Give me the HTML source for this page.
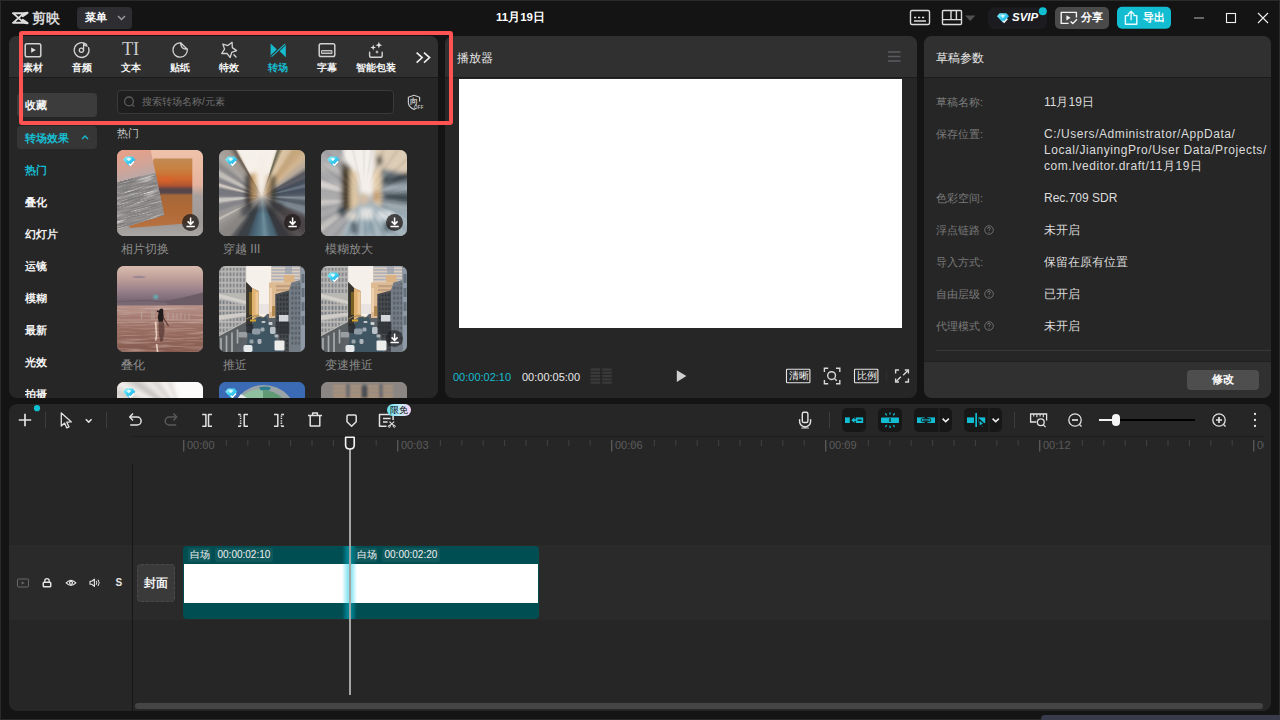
<!DOCTYPE html>
<html lang="zh">
<head>
<meta charset="utf-8">
<title>剪映</title>
<style>
*{box-sizing:border-box;margin:0;padding:0}
html,body{width:1280px;height:720px;overflow:hidden;background:#141414}
body{position:relative;font-family:"Liberation Sans",sans-serif;font-size:12px;color:#fff;-webkit-font-smoothing:antialiased}
.abs{position:absolute}
.win{position:absolute;left:0;top:0;width:1280px;height:720px;border:1px solid #2a2a2a;pointer-events:none;z-index:50}
.panel{position:absolute;background:#262626;border-radius:8px;overflow:hidden}
.phead{position:absolute;left:0;top:0;right:0;height:42px;background:#303030;border-bottom:1px solid #1b1b1b}
.t{position:absolute;white-space:nowrap;line-height:1}
svg{position:absolute;overflow:visible}
/* title bar */
.menu{left:77px;top:7px;width:55px;height:22px;background:#2e2e32;border-radius:4px}
.btn{position:absolute;border-radius:5px}
/* tabs */
.tab{position:absolute;top:61.800px;width:60px;margin-left:-30px;text-align:center;font-size:10px;line-height:11px;color:#f4f4f4;font-weight:bold}
.side{position:absolute;left:25px;font-size:11px;line-height:12px;color:#f4f4f4;font-weight:bold}
.thumb{position:absolute;width:86px;height:86px;border-radius:7px;overflow:hidden;background:#888}
.tl{position:absolute;font-size:12px;line-height:13px;color:#8c8c8c}
.dl{position:absolute;left:65px;top:64px;width:17px;height:17px;border-radius:50%;background:rgba(36,30,30,.78)}
.lab{position:absolute;left:936px;font-size:11.300px;line-height:12px;color:#7a7a7a}
.val{position:absolute;left:1044px;font-size:12px;line-height:16px;color:#dcdcdc}
.tick{position:absolute;top:440px;width:1px;height:6px;background:#3d3d3d}
.mtick{position:absolute;top:440px;width:1px;height:11px;background:#555}
.rt{position:absolute;top:440px;font-size:11px;line-height:11px;color:#5c5c5c}
.tbtn{position:absolute;top:408px;height:24px;background:#171717}
</style>
</head>
<body>

<!-- ================= TITLE BAR ================= -->
<div class="abs" id="titlebar" style="left:0;top:0;width:1280px;height:36px">
  <!-- logo -->
  <svg style="left:12px;top:12px" width="17" height="12" viewBox="0 0 17 12"><path d="M1 1.200h10.400L15.600 .800M1 10.800h10.400L15.600 11.200M1.600 1.600L11.400 10.400M1.600 10.400L11.400 1.600M15.600 1L10.800 4.200M15.600 11L10.800 7.800" fill="none" stroke="#dedede" stroke-width="1.900" stroke-linejoin="round" stroke-linecap="round"/></svg>
  <div class="t" style="left:31.500px;top:11.500px;font-size:13.500px;font-weight:bold;color:#d6d6d6;letter-spacing:.5px">剪映</div>
  <div class="abs menu"></div>
  <div class="t" style="left:85px;top:12px;font-size:11px;font-weight:bold;color:#fff">菜单</div>
  <svg style="left:117px;top:15px" width="9" height="6" viewBox="0 0 9 6"><path d="M1 1l3.5 3.5L8 1" fill="none" stroke="#9a9a9a" stroke-width="1.5"/></svg>
  <div class="t" style="left:496px;top:12px;font-size:11.5px;font-weight:bold;color:#fff">11月19日</div>

  <!-- title bar right -->
  <svg style="left:0;top:0" width="1280" height="36">
    <g fill="none" stroke="#dcdcdc" stroke-width="1.4" stroke-linejoin="round">
      <rect x="910.5" y="10.5" width="19" height="14" rx="1.5"/>
      <path d="M914 17.6h2.2M918 17.6h2.2M922 17.6h2.2M914 21h12" stroke-width="1.5"/>
      <rect x="942.5" y="10.5" width="19" height="14" rx="1"/>
      <path d="M942.5 19.6h19M951 10.5v9M956.4 10.5v9"/>
    </g>
    <path d="M965 15.6h10.4l-5.2 5.4z" fill="#505050"/>
    <!-- svip -->
    <rect x="988" y="7.5" width="59" height="21.5" rx="6" fill="#1c1c20"/>
    <defs><linearGradient id="dia" x1="0" y1="0" x2="1" y2="1"><stop offset="0" stop-color="#8ff4ff"/><stop offset=".55" stop-color="#2fc8ee"/><stop offset="1" stop-color="#3aa0f0"/></linearGradient></defs>
    <path d="M999.6 13.2h6.8l2.6 3l-6 6.6l-6-6.6z" fill="url(#dia)"/>
    <path d="M1000.6 15.6l2.3-1.2l2.4 1.2l-2.4 2.4z" fill="#e8fdff" opacity=".85"/>
    <path d="M1002.6 20.6l1.6 1.6l3.2-3.4" fill="none" stroke="#fff" stroke-width="1.3"/>
    <circle cx="1042.8" cy="11.2" r="4" fill="#10bfd2"/>
    <!-- share -->
    <rect x="1055" y="7" width="54" height="22" rx="5" fill="#4a4a4a"/>
    <g fill="none" stroke="#f4f4f4" stroke-width="1.4" stroke-linejoin="round">
      <path d="M1076.4 17.6v-5.2h-15.2v11h7.4"/>
      <path d="M1070.6 21.4l2.2 2.2l4.2-4.4"/>
    </g>
    <path d="M1066.4 15.2v5.2l4.2-2.6z" fill="#f4f4f4"/>
    <!-- export -->
    <rect x="1117" y="6.8" width="54" height="22" rx="5" fill="#12bdd1"/>
    <g fill="none" stroke="#e8fbff" stroke-width="1.4" stroke-linejoin="round" stroke-linecap="round">
      <path d="M1128.4 15.6h-3v8.6h11.4v-8.6h-3"/>
      <path d="M1131.1 19.8v-8.2M1128.2 14.2l2.9-2.9l2.9 2.9"/>
    </g>
    <!-- window controls -->
    <path d="M1194 18h10" stroke="#8a8a8a" stroke-width="1.4"/>
    <rect x="1226.5" y="13.5" width="9" height="9" fill="none" stroke="#f0f0f0" stroke-width="1.1"/>
    <path d="M1258 13l10 10M1268 13l-10 10" stroke="#f0f0f0" stroke-width="1.1"/>
  </svg>
  <div class="t" style="left:1012px;top:12px;font-size:11.5px;font-weight:bold;font-style:italic;color:#fff">SVIP</div>
  <div class="t" style="left:1081px;top:12px;font-size:11px;font-weight:bold;color:#fff">分享</div>
  <div class="t" style="left:1143px;top:12px;font-size:11px;font-weight:bold;color:#fff">导出</div>
</div>

<!-- ================= LEFT PANEL ================= -->
<div class="panel" id="leftpanel" style="left:9px;top:36px;width:429px;height:362px">
  <div class="phead"></div>
</div>


<!-- ===== left panel content (page coords) ===== -->
<div id="tabs">
  <!-- 素材 -->
  <svg style="left:0;top:0" width="440" height="80">
    <g fill="none" stroke="#d2d2d2" stroke-width="1.5" stroke-linejoin="round" stroke-linecap="round">
      <rect x="25.2" y="43.7" width="15.6" height="13" rx="1.8"/>
      <path d="M31.2 47.4v5.4l4.6-2.7z" fill="#e4e4e4" stroke="none"/>
      <!-- 音频 -->
      <path d="M86.6 44.6A7.4 7.4 0 1 0 88.6 47.6" stroke-width="1.3"/>
      <circle cx="81.4" cy="50.3" r="2.1" stroke-width="1.3"/>
      <path d="M83.6 50.2V43.6q1.2 2.2 3.6 2.6" stroke-width="1.3"/>
      <!-- 贴纸 -->
      <path d="M180.600 42.800A7.200 7.200 0 1 0 187.300 49.200" stroke-width="1.300"/>
      <path d="M180.600 42.800L187.300 49.200Q180.600 49.400 180.600 42.800z" stroke-width="1.300"/>
      <!-- 特效 -->
      <path d="M232.1 42.3L232.3 47.6L236.6 50.6L231.7 52.4L230.2 57.5L227.0 53.3L221.7 53.5L224.6 49.1L222.8 44.1L227.9 45.6z" stroke-width="1.300"/>
      <path d="M233.900 54.800l2.100 2.100" stroke-width="1.400"/>
      <!-- 字幕 -->
      <rect x="319.2" y="43.7" width="15.6" height="12.8" rx="1.8"/>
      <rect x="322" y="50.6" width="10" height="3" stroke-width="1" />
      <path d="M322.6 52.1h8.8" stroke-width=".8"/>
      <!-- 智能包装 -->
      <path d="M369.6 52.2v3.2q0 1.9 1.9 1.9h8.8q1.9 0 1.9-1.9v-3.2" stroke-width="1.4"/>
    </g>
    <g fill="#e6e6e6">
      <path d="M373.2 44.6l.75 2.05l2.05.75l-2.05.75l-.75 2.05l-.75-2.05l-2.05-.75l2.05-.75z"/>
      <path d="M378.9 41.8l.9 2.5l2.5.9l-2.5.9l-.9 2.5l-.9-2.5l-2.5-.9l2.5-.9z"/>
      <path d="M377 50l.55 1.45l1.45.55l-1.45.55l-.55 1.45l-.55-1.45l-1.45-.55l1.45-.55z"/>
    </g>
    <!-- 转场 -->
    <g fill="#16bcd0">
      <path d="M270.6 43.4v13.8l7.2-6.9z"/>
      <path d="M285.8 43.4v13.8l-7.2-6.9z"/>
    </g>
    <path d="M285 43.6L271.4 57" stroke="#303030" stroke-width="3.2" fill="none"/>
    <path d="M284.9 44.2L271.6 56.6" stroke="#16bcd0" stroke-width="1.1" fill="none"/>
    <!-- >> -->
    <path d="M416.6 52.6l5.6 5l-5.6 5M424 52.6l5.6 5l-5.6 5" fill="none" stroke="#f0f0f0" stroke-width="1.6"/>
  </svg>
  <div class="t" style="left:122px;top:40px;font-family:'Liberation Serif',serif;font-size:18.500px;color:#cacaca;letter-spacing:-.3px">TI</div>
  <div class="tab" style="left:33px">素材</div>
  <div class="tab" style="left:82px">音频</div>
  <div class="tab" style="left:131px">文本</div>
  <div class="tab" style="left:180px">贴纸</div>
  <div class="tab" style="left:229px">特效</div>
  <div class="tab" style="left:278px;color:#16bcd0">转场</div>
  <div class="tab" style="left:327px">字幕</div>
  <div class="tab" style="left:376px">智能包装</div>
</div>

<div id="sidebar">
  <div class="abs" style="left:17px;top:93px;width:80px;height:24px;background:#3c3c3c;border-radius:4px"></div>
  <div class="side" style="top:99px">收藏</div>
  <div class="abs" style="left:17px;top:125.500px;width:80px;height:23.500px;background:#363636;border-radius:4px"></div>
  <div class="side" style="top:132px;color:#16bcd0">转场效果</div>
  <svg style="left:81px;top:135px" width="8" height="5" viewBox="0 0 8 5"><path d="M1 4l3-3l3 3" fill="none" stroke="#16bcd0" stroke-width="1.4"/></svg>
  <div class="side" style="top:164px;color:#16bcd0">热门</div>
  <div class="side" style="top:196px">叠化</div>
  <div class="side" style="top:228px">幻灯片</div>
  <div class="side" style="top:260px">运镜</div>
  <div class="side" style="top:292px">模糊</div>
  <div class="side" style="top:324px">最新</div>
  <div class="side" style="top:356px">光效</div>
  <div class="side" style="top:388px;height:10px;overflow:hidden">拍摄</div>
</div>

<div id="search">
  <div class="abs" style="left:117px;top:90px;width:277px;height:24px;background:#1e1e1e;border:1px solid #3a3a3a;border-radius:4px"></div>
  <svg style="left:123px;top:95px" width="13" height="13" viewBox="0 0 13 13"><circle cx="6" cy="6.4" r="4.4" fill="none" stroke="#5c5c5c" stroke-width="1.3"/><path d="M9.2 9.6l2 1.9" stroke="#5c5c5c" stroke-width="1.3"/></svg>
  <div class="t" style="left:142px;top:97px;font-size:10px;color:#707070">搜索转场名称/元素</div>
  <svg style="left:406px;top:94px" width="18" height="17" viewBox="0 0 18 17"><path d="M8 1.2l5.6 2v4.2M8 1.2l-5.6 2v5.6q0 4 5.6 6.6q1-.5 1.6-.9" fill="none" stroke="#c4c4c4" stroke-width="1.2" stroke-linejoin="round"/></svg>
  <div class="t" style="left:410px;top:98px;font-size:8px;color:#c4c4c4;font-weight:bold">向</div>
  <div class="t" style="left:414px;top:106px;font-size:4.5px;color:#c4c4c4;font-weight:bold;letter-spacing:.2px">OFF</div>
  <div class="t" style="left:117px;top:128px;font-size:11px;color:#c6c6c6">热门</div>
</div>

<svg width="0" height="0" style="left:0;top:0"><defs>
<linearGradient id="dia2" x1="0" y1="0" x2="1" y2="1"><stop offset="0" stop-color="#9af6ff"/><stop offset=".5" stop-color="#35cbee"/><stop offset="1" stop-color="#3b9df0"/></linearGradient>
<filter id="b06" x="-10%" y="-10%" width="120%" height="120%"><feGaussianBlur stdDeviation=".6"/></filter>
<filter id="b16" x="-20%" y="-20%" width="140%" height="140%"><feGaussianBlur stdDeviation="2"/></filter>
<filter id="b08" x="-10%" y="-10%" width="120%" height="120%"><feGaussianBlur stdDeviation=".5"/></filter>
<filter id="b1" x="-10%" y="-10%" width="120%" height="120%"><feGaussianBlur stdDeviation="1"/></filter>
<filter id="b2" x="-20%" y="-20%" width="140%" height="140%"><feGaussianBlur stdDeviation="2"/></filter>
<filter id="sea"><feTurbulence type="fractalNoise" baseFrequency="0.06 0.55" numOctaves="2" seed="3" result="n"/><feColorMatrix in="n" type="matrix" values="0 0 0 0 0  0 0 0 0 0  0 0 0 0 0  1.9 0 0 0 -0.75"/><feComposite in2="SourceGraphic" operator="in"/></filter>
<filter id="rip"><feTurbulence type="fractalNoise" baseFrequency="0.03 0.5" numOctaves="2" seed="8" result="n"/><feColorMatrix in="n" type="matrix" values="0 0 0 0 1  0 0 0 0 .85  0 0 0 0 .78  1.6 0 0 0 -0.72"/><feComposite in2="SourceGraphic" operator="in"/></filter>
</defs></svg>
<div id="thumbs">
  <div class="thumb" id="th1" style="left:117px;top:150px"><svg style="left:0;top:0" width="86" height="86" viewBox="0 0 86 86">
<defs>
<linearGradient id="t1bg" x1="0" y1="0" x2="0" y2="1"><stop offset="0" stop-color="#f0c2aa"/><stop offset=".4" stop-color="#e6b49e"/><stop offset=".53" stop-color="#a8a09e"/><stop offset=".85" stop-color="#9c9896"/><stop offset="1" stop-color="#aaa6a4"/></linearGradient>
<linearGradient id="t1o" x1="0" y1="0" x2="0" y2="1"><stop offset="0" stop-color="#c08a54"/><stop offset=".16" stop-color="#c8803f"/><stop offset=".3" stop-color="#d0662e"/><stop offset=".39" stop-color="#b05530"/><stop offset=".44" stop-color="#5a4448"/><stop offset=".49" stop-color="#54464c"/><stop offset=".53" stop-color="#a4663a"/><stop offset=".7" stop-color="#ae6936"/><stop offset="1" stop-color="#b87040"/></linearGradient>
<linearGradient id="t1s" gradientUnits="userSpaceOnUse" x1="14" y1="0" x2="21" y2="28"><stop offset="0" stop-color="#e6a088"/><stop offset=".6" stop-color="#d0a498"/><stop offset=".96" stop-color="#bca8a6"/><stop offset="1" stop-color="#9a9696"/></linearGradient>
<clipPath id="t1c"><path d="M-1 -1H33.500L47.200 65L2 79H-1z"/></clipPath>
<filter id="sea2" x="0" y="0" width="100%" height="100%"><feTurbulence type="fractalNoise" baseFrequency="0.05 0.9" numOctaves="2" seed="5"/><feColorMatrix type="matrix" values="0 0 0 0 .2  0 0 0 0 .19  0 0 0 0 .19  3.400 0 0 0 -1.300"/></filter>
<filter id="sea3" x="0" y="0" width="100%" height="100%"><feTurbulence type="fractalNoise" baseFrequency="0.05 0.85" numOctaves="2" seed="11"/><feColorMatrix type="matrix" values="0 0 0 0 .82  0 0 0 0 .8  0 0 0 0 .8  2.400 0 0 0 -1.250"/></filter>
</defs>
<rect width="86" height="86" fill="url(#t1bg)"/>
<path d="M37 8.400H75.300V73L12 78z" fill="url(#t1o)" filter="url(#b06)"/>
<ellipse cx="49" cy="30" rx="8" ry="3" fill="#e0602c" opacity=".55" filter="url(#b1)"/>
<g clip-path="url(#t1c)">
<rect x="-1" y="-1" width="50" height="82" fill="url(#t1s)"/>
<g transform="rotate(-15.500 0 33.500)">
<rect x="-12" y="33.500" width="74" height="62" fill="#959191"/>
<rect x="-12" y="33.500" width="74" height="62" filter="url(#sea2)"/>
<rect x="-12" y="33.500" width="74" height="62" filter="url(#sea3)"/>
</g>
</g>
</svg><svg style="left:5.5px;top:6px" width="13" height="11" viewBox="0 0 13 11"><path d="M3 .6h6.600l2.800 3.100l-6.100 6.600l-6.100-6.600z" fill="url(#dia2)"/><path d="M3.400 2.800l2.400-1.300l2.600 1.300l-2.600 2.500z" fill="#f0feff" opacity=".9"/><path d="M5.800 7.700l1.700 1.600l3.500-3.700" fill="none" stroke="#fff" stroke-width="1.400"/></svg><div class="dl"><svg style="left:0;top:0" width="17" height="17" viewBox="0 0 17 17"><path d="M8.600 3.600v6.400M5.600 7.400l3 3l3-3" fill="none" stroke="#fff" stroke-width="1.500"/><path d="M4.400 12.500h8.400" stroke="#fff" stroke-width="1.500"/></svg></div></div>
  <div class="thumb" id="th2" style="left:219px;top:150px"><div class="abs" style="left:-6px;top:-6px;width:98px;height:98px;filter:blur(.7px);background:radial-gradient(circle at 50% 53.600%,rgba(226,214,202,.95) 0,rgba(206,190,172,.75) 5%,rgba(150,120,84,.4) 10%,rgba(70,60,52,.28) 15%,rgba(80,80,84,0) 26%),conic-gradient(from 0deg at 50% 53.600%,#f6f0ea 0deg,#f6f0ea 15deg,#e8dccb 17deg,#7a7664 18.500deg,#6e6c5c 20deg,#a89878 22deg,#dcc6a6 25deg,#d8c0a0 30deg,#c4a67c 35deg,#c8a880 40deg,#d2b692 46deg,#c0ae9a 51deg,#b4a698 55deg,#8a8480 58deg,#54545c 61deg,#5e5e66 65deg,#4a4e58 69deg,#424e5e 72deg,#6c7680 76deg,#444f5e 80deg,#4a5462 84deg,#565e68 88deg,#88909a 92deg,#5a626c 96deg,#545c66 100deg,#7a848e 104deg,#7c868e 110deg,#5e6066 114deg,#4c4648 118deg,#484244 128deg,#585254 136deg,#4a4648 142deg,#38383c 148deg,#363a40 156deg,#46606e 161deg,#52707f 168deg,#6e8e9e 176deg,#587888 182deg,#4c6878 190deg,#43596a 196deg,#3a4248 201deg,#3c4044 210deg,#5c5c5e 216deg,#888482 220deg,#8a8684 228deg,#969290 236deg,#a09c9a 240deg,#cac2ba 242.500deg,#9c9896 245deg,#969496 250deg,#868689 253deg,#84848a 259deg,#a4a2a2 261.500deg,#cac6c2 263.500deg,#c6c2be 267deg,#8c8c90 269.500deg,#78787f 272deg,#76767e 280deg,#a8a4a0 282.500deg,#d2cac2 284.500deg,#cec6be 286deg,#8e8c8e 288deg,#808086 291deg,#9c9a9a 293.500deg,#c2beba 296deg,#bebab6 300deg,#969494 302.500deg,#8a8888 306deg,#9c9a98 309.500deg,#aaa6a2 313deg,#a6a09a 318deg,#a09890 324deg,#8a8078 326.500deg,#665e58 329deg,#8a7c6c 330.500deg,#e6dccf 332deg,#f6f0ea 334deg,#f6f0ea 360deg)"></div><svg style="left:0;top:0" width="86" height="86" viewBox="0 0 86 86">
<ellipse cx="42.500" cy="24" rx="5.500" ry="21" fill="#f5eee7" filter="url(#b2)"/>
<g filter="url(#b16)">
<rect x="26.500" y="25" width="6" height="33" fill="#2c2826" opacity=".8"/>
<rect x="33" y="23" width="4.200" height="27" fill="#c8964e" opacity=".75"/>
<rect x="47.500" y="25" width="3" height="23" fill="#c8a070" opacity=".7"/>
<rect x="51" y="26" width="5.500" height="27" fill="#3a3832" opacity=".75"/>
<rect x="36" y="48" width="14" height="9" fill="#8a94a0" opacity=".6"/>
<rect x="22" y="56" width="12" height="10" fill="#2c3238" opacity=".6"/>
<rect x="52" y="52" width="12" height="10" fill="#30343a" opacity=".55"/>
</g></svg><svg style="left:5.5px;top:6px" width="13" height="11" viewBox="0 0 13 11"><path d="M3 .6h6.600l2.800 3.100l-6.100 6.600l-6.100-6.600z" fill="url(#dia2)"/><path d="M3.400 2.800l2.400-1.300l2.600 1.300l-2.600 2.500z" fill="#f0feff" opacity=".9"/><path d="M5.800 7.700l1.700 1.600l3.500-3.700" fill="none" stroke="#fff" stroke-width="1.400"/></svg><div class="dl"><svg style="left:0;top:0" width="17" height="17" viewBox="0 0 17 17"><path d="M8.600 3.600v6.400M5.600 7.400l3 3l3-3" fill="none" stroke="#fff" stroke-width="1.500"/><path d="M4.400 12.500h8.400" stroke="#fff" stroke-width="1.500"/></svg></div></div>
  <div class="thumb" id="th3" style="left:321px;top:150px"><svg style="left:0;top:0" width="86" height="86" viewBox="0 0 86 86">
<g filter="url(#b16)">
<rect x="-6" y="-6" width="98" height="98" fill="#a2b2bb"/>
<path d="M-6 -6H22V64L30 60L20 92H-6z" fill="#a5a5a7"/>
<path d="M-6 29L22 37V42L-6 37z" fill="#dad6d2"/>
<path d="M-6 49L22 49.500V53L-6 55z" fill="#d2cecb"/>
<path d="M-6 80L22 60.500V64L-6 87z" fill="#cdc9c5"/>
<path d="M-6 10L22 18V24L-6 18z" fill="#bdbbb9"/>
<path d="M20.500 10L29.500 16.500V60L20.500 66z" fill="#4a3c2c"/>
<path d="M29 17L37 22V56L29 60.500z" fill="#dec6a2"/>
<path d="M22 -6H53.500L52 42L46.500 50H40L36.500 23L29 17L22 11z" fill="#f4f0ec"/>
<path d="M52 22L60.500 18V57L52 52z" fill="#e4ccaa"/>
<path d="M52.500 41h6v10h-6z" fill="#c49a66"/>
<path d="M53.500 -6H92V25L60.500 19L53 22z" fill="#dccbb4"/>
<path d="M55 7L60.500 5L62 14L56.500 16z" fill="#626258"/>
<path d="M60.500 19L92 25V62L60.500 57z" fill="#69757d"/>
<path d="M62 29L92 21V28L62 34z" fill="#363e44"/><path d="M64 44L92 46V53L64 48.500z" fill="#384248"/>
<path d="M62 37.500L92 34V39L62 41z" fill="#b2bec6"/><path d="M62 52L92 56V60L62 55z" fill="#b8c4ca"/>
<rect x="39" y="58" width="13" height="11" fill="#e0e2e0"/><rect x="56" y="61" width="16" height="9" fill="#d4dce0"/>
<rect x="26" y="62" width="10" height="8" fill="#d8d4cc"/>
<rect x="30" y="72" width="6.500" height="12" fill="#4c5c68"/><rect x="17" y="57" width="7.500" height="9" fill="#3a4a52"/>
<rect x="62" y="73" width="9" height="9" fill="#5a6a74"/><rect x="44" y="72" width="8" height="12" fill="#8aa0ac"/>
<circle cx="43" cy="49" r="6" fill="#cfbca6"/>
</g>
</svg>
<div class="abs" style="left:0;top:0;width:86px;height:86px;background:repeating-conic-gradient(from 3deg at 50% 56%,rgba(255,255,255,.08) 0deg,rgba(255,255,255,0) 3deg,rgba(20,20,30,.06) 6deg,rgba(20,20,30,0) 9deg,rgba(255,255,255,.06) 11deg,rgba(255,255,255,0) 13deg);-webkit-mask-image:radial-gradient(circle at 50% 56%,transparent 12%,#000 45%);mask-image:radial-gradient(circle at 50% 56%,transparent 12%,#000 45%)"></div><svg style="left:5.5px;top:6px" width="13" height="11" viewBox="0 0 13 11"><path d="M3 .6h6.600l2.800 3.100l-6.100 6.600l-6.100-6.600z" fill="url(#dia2)"/><path d="M3.400 2.800l2.400-1.300l2.600 1.300l-2.600 2.500z" fill="#f0feff" opacity=".9"/><path d="M5.800 7.700l1.700 1.600l3.500-3.700" fill="none" stroke="#fff" stroke-width="1.400"/></svg><div class="dl"><svg style="left:0;top:0" width="17" height="17" viewBox="0 0 17 17"><path d="M8.600 3.600v6.400M5.600 7.400l3 3l3-3" fill="none" stroke="#fff" stroke-width="1.500"/><path d="M4.400 12.500h8.400" stroke="#fff" stroke-width="1.500"/></svg></div></div>
  <div class="thumb" id="th4" style="left:117px;top:266px"><svg style="left:0;top:0" width="86" height="86" viewBox="0 0 86 86">
<defs>
<linearGradient id="t4s" x1="0" y1="0" x2="0" y2="1"><stop offset="0" stop-color="#d8bcae"/><stop offset=".3" stop-color="#c0a09a"/><stop offset=".62" stop-color="#98808a"/><stop offset=".85" stop-color="#7a6a76"/><stop offset="1" stop-color="#6e626c"/></linearGradient>
<linearGradient id="t4w" x1="0" y1="0" x2="0" y2="1"><stop offset="0" stop-color="#b8948c"/><stop offset=".25" stop-color="#a67c72"/><stop offset=".6" stop-color="#966a5e"/><stop offset="1" stop-color="#855a4e"/></linearGradient>
</defs>
<rect width="86" height="40" fill="url(#t4s)"/>
<rect y="39" width="86" height="47" fill="url(#t4w)"/>
<g filter="url(#b06)">
<path d="M0 35.500L14 34.500L30 33.800L42 35L52 34.200L66 31.600L86 26.600V39.300H0z" fill="#6c5c66"/>
<path d="M0 36L30 35L50 36.800V39.300H0z" fill="#7a6a74" opacity=".8"/>
<ellipse cx="22" cy="11" rx="7" ry="1.200" fill="#8c7c92" opacity=".7"/>
</g>
<circle cx="38.700" cy="31" r="2.300" fill="#5cc4cc" filter="url(#b1)" opacity=".8"/>
<rect y="40" width="86" height="46" fill="#fff" filter="url(#rip)" opacity=".55"/>
<g filter="url(#b06)">
<path d="M24.500 45.500v8M35 44v9.500M37 44.500v9M51 46.500v7M56 47v6.500M60 47.500v6M64 47v6.500M68 48v5.500M72 47.500v6" stroke="#c8c4bc" stroke-width="1.100" opacity=".42"/>
<path d="M0 54h86" stroke="#c4a49c" stroke-width="1.400" opacity=".5"/>
<path d="M42 44.500q1.200-2.600 3.400-1.800q1.600 1 .8 3l.6 6.500l-1 3.500h-4.200l-.8-4.500z" fill="#241a1e"/>
<path d="M40 44.800l3 1.400" stroke="#241a1e" stroke-width="1.400"/>
<path d="M46.500 52l5 8" stroke="#5a3a36" stroke-width="1.200"/>
<path d="M41.500 56h5.500l.6 9l-1.800 10l-2.600 1l-1.400-9z" fill="#5a3834" opacity=".75"/>
<path d="M38.600 55.500l.8 14l-.6 5M39.600 78l1 8" stroke="#f2dccc" stroke-width="1.700" opacity=".85"/>
</g>
</svg></div>
  <div class="thumb" id="th5" style="left:219px;top:266px"><svg style="left:0;top:0" width="86" height="86" viewBox="0 0 86 86">
<defs>
<pattern id="wL5" width="3.400" height="5.600" patternUnits="userSpaceOnUse"><rect x=".4" y=".8" width="1.700" height="3.800" fill="#6d737b"/></pattern>
<pattern id="wR5" width="86" height="3.200" patternUnits="userSpaceOnUse"><rect x="0" y="0" width="86" height="1.400" fill="#a2a9b8"/></pattern>
<pattern id="wD5" width="3.200" height="4.600" patternUnits="userSpaceOnUse"><rect x="0" y="0" width="1.800" height="2.800" fill="#2e3236"/></pattern>
<pattern id="wG5" width="3.600" height="5" patternUnits="userSpaceOnUse"><rect x=".4" y=".6" width="1.800" height="3" fill="#4e565e"/></pattern>
</defs>
<rect width="86" height="86" fill="#5c6268"/>
<g filter="url(#b08)">
<!-- sky -->
<path d="M27 -1H52.500V17L50 18V46L45 51H39.500V25L33 22L27 16z" fill="#f6f0ea"/>
<path d="M40 38h10v10h-10z" fill="#e9e4e2"/>
<!-- right tall beige -->
<path d="M52 -1H81.500V17H52z" fill="#dccdbd"/><path d="M52.500 0H81V16H52.500z" fill="url(#wR5)" opacity=".9"/>
<path d="M65 9h10.500v7.500H65z" fill="#dab284"/>
<path d="M66 0h7v8h-7z" fill="#98a0ac" opacity=".7"/>
<!-- right mid tan -->
<path d="M50 16.500H72.500V28H56.500V52H50z" fill="#deba92"/>
<path d="M57 19h14v2.200H57zM57 23h14v2.200H57z" fill="#b89a80" opacity=".8"/>
<path d="M50.500 22h2.400v24h-2.400z" fill="#ecd2b0"/>
<path d="M53 40h3.500v10H53z" fill="#b08850"/>
<!-- right gray buildings -->
<path d="M70 24L72.500 16.500L81.500 14V87H70z" fill="#737b84"/>
<path d="M71 20L81 17V80H71z" fill="url(#wG5)" opacity=".85"/>
<path d="M56.500 28L70 24.500V87H64L56.500 60z" fill="#474b50"/>
<path d="M57.500 30L69.500 27V84H64L57.500 58z" fill="url(#wD5)" opacity=".9"/>
<path d="M81.500 2L87 0V87H81.500z" fill="#8d99a6"/>
<path d="M82.500 8h3v9h-3zM82.500 22h3v9h-3zM82.500 36h3v9h-3zM82.500 50h3v9h-3z" fill="#5c6670" opacity=".8"/>
<path d="M60 49h9.500v6.500H60z" fill="#e2e6ea" opacity=".9"/>
<path d="M56.500 56h14v12h-14z" fill="#2c3034" opacity=".65"/>
<!-- left building -->
<path d="M-1 -1H27.200V56L-1 71z" fill="#b9b7b4"/>
<path d="M0 2H26.500V27H0z" fill="url(#wL5)" opacity=".8"/>
<path d="M-1 27.500L27.200 35V38L-1 31.500z" fill="#d3cfcb"/>
<path d="M0 33L26.500 39.500V47L0 49z" fill="url(#wL5)" opacity=".95"/>
<path d="M-1 49.500L27.200 46.500V49.500L-1 54z" fill="#d0ccc8"/>
<path d="M0 55L26.500 50.500V55L0 69z" fill="url(#wL5)" opacity=".85"/>
<path d="M-1 71L27.200 56V63L18 87H-1z" fill="#5a5e62"/>
<path d="M2 72v15M7.500 69.500v17M13 66.500v20M18.500 63.500v14" stroke="#a9abac" stroke-width="1.700"/>
<!-- dark + tan behind -->
<path d="M27.200 16L33 22V60H27.200z" fill="#38342e"/><path d="M30 26h3v23h-3z" fill="#86691e" opacity=".85"/>
<path d="M33 22L39.500 25V50L33 54z" fill="#e2b272"/><path d="M36.500 26h3v22h-3z" fill="#ecc996"/>
<!-- road -->
<path d="M39.500 51H47.500L63 87H27L30 62z" fill="#3f5462"/>
<path d="M27.200 58h7v9h-7z" fill="#2a2e32" opacity=".85"/>
<path d="M27.500 53q8-5.500 17-1.500" fill="none" stroke="#9a8458" stroke-width="1"/>
<path d="M31 53.500h6v2h-6z" fill="#d4a430"/>
<!-- cars -->
<rect x="24.500" y="79" width="9" height="7" rx="1.800" fill="#e6eaec"/>
<rect x="55.500" y="74.500" width="10" height="10" rx="1" fill="#ececea"/>
<rect x="51" y="61" width="5.500" height="7" rx="1.400" fill="#b9c2c8"/>
<rect x="33" y="62.500" width="8.500" height="6" rx="2" fill="#8e9aa4"/>
<rect x="38.500" y="73" width="4" height="5" rx="1.400" fill="#aeb6bc"/>
<rect x="41.500" y="61.500" width="4" height="4" rx="1.200" fill="#9eaab2"/>
<rect x="19.500" y="66" width="8.500" height="5.500" rx="1" fill="#9a9ea2"/>
<rect x="30.500" y="73.500" width="4" height="4" rx="1.200" fill="#98a2a8"/>
<rect x="49.500" y="56" width="4" height="3" rx="1" fill="#ccd0d2"/>
<rect x="42.500" y="55" width="4" height="2" rx="1" fill="#c8c8c6"/>
<rect x="55.500" y="68.500" width="4" height="3" rx="1" fill="#a8b2b8"/>
</g>
</svg></div>
  <div class="thumb" id="th6" style="left:321px;top:266px"><svg style="left:0;top:0" width="86" height="86" viewBox="0 0 86 86">
<defs>
<pattern id="wL6" width="3.400" height="5.600" patternUnits="userSpaceOnUse"><rect x=".4" y=".8" width="1.700" height="3.800" fill="#6d737b"/></pattern>
<pattern id="wR6" width="86" height="3.200" patternUnits="userSpaceOnUse"><rect x="0" y="0" width="86" height="1.400" fill="#a2a9b8"/></pattern>
<pattern id="wD6" width="3.200" height="4.600" patternUnits="userSpaceOnUse"><rect x="0" y="0" width="1.800" height="2.800" fill="#2e3236"/></pattern>
<pattern id="wG6" width="3.600" height="5" patternUnits="userSpaceOnUse"><rect x=".4" y=".6" width="1.800" height="3" fill="#4e565e"/></pattern>
</defs>
<rect width="86" height="86" fill="#5c6268"/>
<g filter="url(#b08)">
<!-- sky -->
<path d="M27 -1H52.500V17L50 18V46L45 51H39.500V25L33 22L27 16z" fill="#f6f0ea"/>
<path d="M40 38h10v10h-10z" fill="#e9e4e2"/>
<!-- right tall beige -->
<path d="M52 -1H81.500V17H52z" fill="#dccdbd"/><path d="M52.500 0H81V16H52.500z" fill="url(#wR6)" opacity=".9"/>
<path d="M65 9h10.500v7.500H65z" fill="#dab284"/>
<path d="M66 0h7v8h-7z" fill="#98a0ac" opacity=".7"/>
<!-- right mid tan -->
<path d="M50 16.500H72.500V28H56.500V52H50z" fill="#deba92"/>
<path d="M57 19h14v2.200H57zM57 23h14v2.200H57z" fill="#b89a80" opacity=".8"/>
<path d="M50.500 22h2.400v24h-2.400z" fill="#ecd2b0"/>
<path d="M53 40h3.500v10H53z" fill="#b08850"/>
<!-- right gray buildings -->
<path d="M70 24L72.500 16.500L81.500 14V87H70z" fill="#737b84"/>
<path d="M71 20L81 17V80H71z" fill="url(#wG6)" opacity=".85"/>
<path d="M56.500 28L70 24.500V87H64L56.500 60z" fill="#474b50"/>
<path d="M57.500 30L69.500 27V84H64L57.500 58z" fill="url(#wD6)" opacity=".9"/>
<path d="M81.500 2L87 0V87H81.500z" fill="#8d99a6"/>
<path d="M82.500 8h3v9h-3zM82.500 22h3v9h-3zM82.500 36h3v9h-3zM82.500 50h3v9h-3z" fill="#5c6670" opacity=".8"/>
<path d="M60 49h9.500v6.500H60z" fill="#e2e6ea" opacity=".9"/>
<path d="M56.500 56h14v12h-14z" fill="#2c3034" opacity=".65"/>
<!-- left building -->
<path d="M-1 -1H27.200V56L-1 71z" fill="#b9b7b4"/>
<path d="M0 2H26.500V27H0z" fill="url(#wL6)" opacity=".8"/>
<path d="M-1 27.500L27.200 35V38L-1 31.500z" fill="#d3cfcb"/>
<path d="M0 33L26.500 39.500V47L0 49z" fill="url(#wL6)" opacity=".95"/>
<path d="M-1 49.500L27.200 46.500V49.500L-1 54z" fill="#d0ccc8"/>
<path d="M0 55L26.500 50.500V55L0 69z" fill="url(#wL6)" opacity=".85"/>
<path d="M-1 71L27.200 56V63L18 87H-1z" fill="#5a5e62"/>
<path d="M2 72v15M7.500 69.500v17M13 66.500v20M18.500 63.500v14" stroke="#a9abac" stroke-width="1.700"/>
<!-- dark + tan behind -->
<path d="M27.200 16L33 22V60H27.200z" fill="#38342e"/><path d="M30 26h3v23h-3z" fill="#86691e" opacity=".85"/>
<path d="M33 22L39.500 25V50L33 54z" fill="#e2b272"/><path d="M36.500 26h3v22h-3z" fill="#ecc996"/>
<!-- road -->
<path d="M39.500 51H47.500L63 87H27L30 62z" fill="#3f5462"/>
<path d="M27.200 58h7v9h-7z" fill="#2a2e32" opacity=".85"/>
<path d="M27.500 53q8-5.500 17-1.500" fill="none" stroke="#9a8458" stroke-width="1"/>
<path d="M31 53.500h6v2h-6z" fill="#d4a430"/>
<!-- cars -->
<rect x="24.500" y="79" width="9" height="7" rx="1.800" fill="#e6eaec"/>
<rect x="55.500" y="74.500" width="10" height="10" rx="1" fill="#ececea"/>
<rect x="51" y="61" width="5.500" height="7" rx="1.400" fill="#b9c2c8"/>
<rect x="33" y="62.500" width="8.500" height="6" rx="2" fill="#8e9aa4"/>
<rect x="38.500" y="73" width="4" height="5" rx="1.400" fill="#aeb6bc"/>
<rect x="41.500" y="61.500" width="4" height="4" rx="1.200" fill="#9eaab2"/>
<rect x="19.500" y="66" width="8.500" height="5.500" rx="1" fill="#9a9ea2"/>
<rect x="30.500" y="73.500" width="4" height="4" rx="1.200" fill="#98a2a8"/>
<rect x="49.500" y="56" width="4" height="3" rx="1" fill="#ccd0d2"/>
<rect x="42.500" y="55" width="4" height="2" rx="1" fill="#c8c8c6"/>
<rect x="55.500" y="68.500" width="4" height="3" rx="1" fill="#a8b2b8"/>
</g>
</svg><svg style="left:5.5px;top:6px" width="13" height="11" viewBox="0 0 13 11"><path d="M3 .6h6.600l2.800 3.100l-6.100 6.600l-6.100-6.600z" fill="url(#dia2)"/><path d="M3.400 2.800l2.400-1.300l2.600 1.300l-2.600 2.500z" fill="#f0feff" opacity=".9"/><path d="M5.800 7.700l1.700 1.600l3.500-3.700" fill="none" stroke="#fff" stroke-width="1.400"/></svg><div class="dl" style="background:rgba(20,20,22,.55)"><svg style="left:0;top:0" width="17" height="17" viewBox="0 0 17 17"><path d="M8.600 3.600v6.400M5.600 7.400l3 3l3-3" fill="none" stroke="#fff" stroke-width="1.500"/><path d="M4.400 12.500h8.400" stroke="#fff" stroke-width="1.500"/></svg></div></div>
  <div class="thumb" id="th7" style="left:117px;top:382px;height:16px;border-radius:7px 7px 0 0;background:#f2eeea"><div class="abs" style="left:-4px;top:-4px;width:94px;height:30px;filter:blur(.8px);background:conic-gradient(from 0deg at 75% 130%,#fdfcfb 0deg,#fdfcfb 280deg,#d2cecb 290deg,#f2efed 298deg,#c6c2c0 306deg,#ebe8e6 314deg,#d8d4d2 322deg,#f6f4f2 330deg,#e4e0de 338deg,#fbfaf9 346deg,#fdfcfb 360deg)"></div><svg style="left:5.5px;top:6px" width="13" height="11" viewBox="0 0 13 11"><path d="M3 .6h6.600l2.800 3.100l-6.100 6.600l-6.100-6.600z" fill="url(#dia2)"/><path d="M3.400 2.800l2.400-1.300l2.600 1.300l-2.600 2.500z" fill="#f0feff" opacity=".9"/><path d="M5.800 7.700l1.700 1.600l3.500-3.700" fill="none" stroke="#fff" stroke-width="1.400"/></svg></div>
  <div class="thumb" id="th8" style="left:219px;top:382px;height:16px;border-radius:7px 7px 0 0;background:#3d6cb6"><svg style="left:0;top:0" width="86" height="16" viewBox="0 0 86 16"><rect width="86" height="16" fill="#3c6bb6"/><g filter="url(#b06)"><circle cx="45" cy="36" r="33" fill="#9aa4a6"/><circle cx="43" cy="38" r="30" fill="#5f9a74"/><path d="M22 16q8-9 22-9v9z" fill="#8fc0a0"/><path d="M40 5.500q6-2 12 0l-2 3q-4-1.200-8 0z" fill="#2e7e8e"/><path d="M22 12l6 4h-9z" fill="#e8ecec"/></g></svg><svg style="left:5.5px;top:6px" width="13" height="11" viewBox="0 0 13 11"><path d="M3 .6h6.600l2.800 3.100l-6.100 6.600l-6.100-6.600z" fill="url(#dia2)"/><path d="M3.400 2.800l2.400-1.300l2.600 1.300l-2.600 2.500z" fill="#f0feff" opacity=".9"/><path d="M5.800 7.700l1.700 1.600l3.500-3.700" fill="none" stroke="#fff" stroke-width="1.400"/></svg></div>
  <div class="thumb" id="th9" style="left:321px;top:382px;height:16px;border-radius:7px 7px 0 0;background:#8c8784"><svg style="left:0;top:0" width="86" height="16" viewBox="0 0 86 16"><rect width="86" height="16" fill="#8b8683"/><g filter="url(#b1)"><path d="M12 4.500h60M12 8.500h60M12 12.500h60M12 16h60" stroke="#b5967a" stroke-width="1.800"/><path d="M27 2v14M43.500 2v14M60 2v14" stroke="#6a6c70" stroke-width="4"/><path d="M43.500 4v12" stroke="#4c5054" stroke-width="6"/></g></svg></div>
  <div class="tl" style="left:121px;top:242.600px">相片切换</div>
  <div class="tl" style="left:223px;top:242.600px">穿越 III</div>
  <div class="tl" style="left:325px;top:242.600px">模糊放大</div>
  <div class="tl" style="left:121px;top:358.600px">叠化</div>
  <div class="tl" style="left:223px;top:358.600px">推近</div>
  <div class="tl" style="left:325px;top:358.600px">变速推近</div>
</div>

<!-- ================= PLAYER PANEL ================= -->
<div class="panel" id="player" style="left:445px;top:36px;width:472px;height:362px">
  <div class="phead"></div>
  <div class="t" style="left:12px;top:15.700px;font-size:12px;color:#e6e6e6">播放器</div>
  <div class="abs" style="left:14px;top:43px;width:443px;height:249px;background:#fff"></div>
  <div class="t" style="left:8px;top:336px;font-size:11px;color:#16bcd0">00:00:02:10</div>
  <div class="t" style="left:77px;top:336px;font-size:11px;color:#e8e8e8">00:00:05:00</div>
</div>


<!-- player controls (page coords) -->
<svg style="left:0;top:0" width="930" height="400">
  <!-- hamburger -->
  <path d="M888 52h12.5M888 56.5h12.5M888 61h12.5" stroke="#5a5a60" stroke-width="1.4"/>
  <!-- meter -->
  <g fill="#3a3a3a">
    <rect x="590.5" y="368.4" width="9.6" height="2.2"/><rect x="590.5" y="371.7" width="9.6" height="2.2"/><rect x="590.5" y="375" width="9.6" height="2.2"/><rect x="590.5" y="378.3" width="9.6" height="2.2"/><rect x="590.5" y="381.6" width="9.6" height="2.2"/>
    <rect x="602.2" y="368.4" width="9.6" height="2.2"/><rect x="602.2" y="371.7" width="9.6" height="2.2"/><rect x="602.2" y="375" width="9.6" height="2.2"/><rect x="602.2" y="378.3" width="9.6" height="2.2"/><rect x="602.2" y="381.6" width="9.6" height="2.2"/>
  </g>
  <!-- play -->
  <path d="M676.8 370.2v11.8l9.6-5.9z" fill="#d0d0d0"/>
  <!-- quality / ratio boxes -->
  <g fill="none" stroke="#e8e8e8" stroke-width="1.1">
    <rect x="786.5" y="369.2" width="23.4" height="13.6" rx=".8"/>
    <rect x="854.5" y="369.2" width="23.4" height="13.6" rx=".8"/>
  </g>
  <!-- focus -->
  <g fill="none" stroke="#d8d8d8" stroke-width="1.4">
    <path d="M824.4 372v-3.8h3.8M836 368.2h3.8v3.800M839.800 380v3.800h-3.800M828.200 383.800h-3.800v-3.800"/>
    <circle cx="831.600" cy="375.6" r="3.900"/>
    <path d="M834.4 378.500l2.400 2.300"/>
  </g>
  <!-- divider -->
  <path d="M886.5 371v10" stroke="#2f2f2f" stroke-width="1"/>
  <!-- fullscreen -->
  <g fill="none" stroke="#d8d8d8" stroke-width="1.4">
    <path d="M895.600 373.400v-3.400h3.400M904.800 370h3.600v3.600M908.400 378.600v3.400h-3.400M899 382h-3.400v-3.400"/>
    <path d="M907.800 370.600l-4.600 4.600M896.200 381.400l4.600-4.600"/>
  </g>
</svg>
<div class="t" style="left:788px;top:371px;font-size:10px;color:#f0f0f0;width:21px;text-align:center">清晰</div>
<div class="t" style="left:856px;top:371px;font-size:10px;color:#f0f0f0;width:21px;text-align:center">比例</div>

<!-- ================= RIGHT PANEL ================= -->
<div class="panel" id="rightpanel" style="left:924px;top:36px;width:347px;height:362px">
  <div class="phead"></div>
  <div class="t" style="left:12px;top:15.700px;font-size:12px;color:#e6e6e6">草稿参数</div>
  <div class="abs" style="left:12px;top:314px;right:0;height:1px;background:#383838"></div>
  <div class="abs" style="left:0;top:325px;right:0;height:1px;background:#202020"></div>
  <div class="abs" style="left:0;top:326px;right:0;bottom:0;background:#303030"></div>
  <div class="abs" style="left:263px;top:334px;width:72px;height:20px;background:#4e4e4e;border-radius:4px"></div>
  <div class="t" style="left:263px;top:338px;width:72px;text-align:center;font-size:11px;font-weight:bold;color:#fff">修改</div>
</div>
<div class="lab" style="top:96px">草稿名称:</div><div class="val" style="top:94px">11月19日</div>
<div class="lab" style="top:128px">保存位置:</div><div class="val" style="top:126px;letter-spacing:.56px">C:/Users/Administrator/AppData/<br>Local/JianyingPro/User Data/Projects/<br>com.lveditor.draft/11月19日</div>
<div class="lab" style="top:192px">色彩空间:</div><div class="val" style="top:190px;letter-spacing:0">Rec.709 SDR</div>
<div class="lab" style="top:224px">浮点链路</div><div class="val" style="top:222px">未开启</div>
<div class="lab" style="top:256px">导入方式:</div><div class="val" style="top:254px">保留在原有位置</div>
<div class="lab" style="top:288px">自由层级</div><div class="val" style="top:286px">已开启</div>
<div class="lab" style="top:320px">代理模式</div><div class="val" style="top:318px">未开启</div>


<svg style="left:0;top:0" width="1000" height="340"><g fill="none" stroke="#6c6c6c" stroke-width="1"><circle cx="989" cy="230" r="4.300"/><circle cx="989" cy="294" r="4.300"/><circle cx="989" cy="326" r="4.300"/></g>
<g fill="none" stroke="#7a7a7a" stroke-width=".9"><path d="M987.600 228.800q0-1.400 1.400-1.400t1.400 1.300q0 .8-1.400 1.500v.7M989 232v.8"/><path d="M987.600 292.800q0-1.400 1.400-1.400t1.400 1.300q0 .8-1.400 1.500v.7M989 296v.8"/><path d="M987.600 324.800q0-1.400 1.400-1.400t1.400 1.300q0 .8-1.400 1.500v.7M989 328v.8"/></g></svg>

<!-- ================= TIMELINE ================= -->
<div class="panel" id="timeline" style="left:9px;top:404px;width:1262px;height:307px">
</div>


<!-- ===== timeline content (page coords) ===== -->
<div class="abs" style="left:9px;top:545px;width:1262px;height:75px;background:#2a2a2a"></div>
<div class="abs" style="left:133px;top:436px;width:1131px;height:1px;background:#1c1c1c"></div>
<div class="abs" style="left:132px;top:464px;width:1px;height:247px;background:#161616"></div>
<div class="abs" id="rulerlabels" style="left:0;top:0;width:1264px;height:460px;overflow:hidden">
<div class="rt" style="left:187.0px">00:00</div>
<div class="rt" style="left:401.0px">00:03</div>
<div class="rt" style="left:615.0px">00:06</div>
<div class="rt" style="left:829.0px">00:09</div>
<div class="rt" style="left:1043.0px">00:12</div>
<div class="rt" style="left:1257.0px">00:15</div>
</div>
<svg style="left:0;top:0" width="1280" height="720">
<rect x="183.0" y="440" width="1.4" height="11.5" fill="#585858"/>
<rect x="204.4" y="440" width="1.2" height="6" fill="#3e3e3e"/>
<rect x="225.8" y="440" width="1.2" height="6" fill="#3e3e3e"/>
<rect x="247.2" y="440" width="1.2" height="6" fill="#3e3e3e"/>
<rect x="268.6" y="440" width="1.2" height="6" fill="#3e3e3e"/>
<rect x="290.0" y="440" width="1.2" height="6" fill="#3e3e3e"/>
<rect x="311.4" y="440" width="1.2" height="6" fill="#3e3e3e"/>
<rect x="332.8" y="440" width="1.2" height="6" fill="#3e3e3e"/>
<rect x="354.2" y="440" width="1.2" height="6" fill="#3e3e3e"/>
<rect x="375.6" y="440" width="1.2" height="6" fill="#3e3e3e"/>
<rect x="397.0" y="440" width="1.4" height="11.5" fill="#585858"/>
<rect x="418.4" y="440" width="1.2" height="6" fill="#3e3e3e"/>
<rect x="439.8" y="440" width="1.2" height="6" fill="#3e3e3e"/>
<rect x="461.2" y="440" width="1.2" height="6" fill="#3e3e3e"/>
<rect x="482.6" y="440" width="1.2" height="6" fill="#3e3e3e"/>
<rect x="504.0" y="440" width="1.2" height="6" fill="#3e3e3e"/>
<rect x="525.4" y="440" width="1.2" height="6" fill="#3e3e3e"/>
<rect x="546.8" y="440" width="1.2" height="6" fill="#3e3e3e"/>
<rect x="568.2" y="440" width="1.2" height="6" fill="#3e3e3e"/>
<rect x="589.6" y="440" width="1.2" height="6" fill="#3e3e3e"/>
<rect x="611.0" y="440" width="1.4" height="11.5" fill="#585858"/>
<rect x="632.4" y="440" width="1.2" height="6" fill="#3e3e3e"/>
<rect x="653.8" y="440" width="1.2" height="6" fill="#3e3e3e"/>
<rect x="675.2" y="440" width="1.2" height="6" fill="#3e3e3e"/>
<rect x="696.6" y="440" width="1.2" height="6" fill="#3e3e3e"/>
<rect x="718.0" y="440" width="1.2" height="6" fill="#3e3e3e"/>
<rect x="739.4" y="440" width="1.2" height="6" fill="#3e3e3e"/>
<rect x="760.8" y="440" width="1.2" height="6" fill="#3e3e3e"/>
<rect x="782.2" y="440" width="1.2" height="6" fill="#3e3e3e"/>
<rect x="803.6" y="440" width="1.2" height="6" fill="#3e3e3e"/>
<rect x="825.0" y="440" width="1.4" height="11.5" fill="#585858"/>
<rect x="846.4" y="440" width="1.2" height="6" fill="#3e3e3e"/>
<rect x="867.8" y="440" width="1.2" height="6" fill="#3e3e3e"/>
<rect x="889.2" y="440" width="1.2" height="6" fill="#3e3e3e"/>
<rect x="910.6" y="440" width="1.2" height="6" fill="#3e3e3e"/>
<rect x="932.0" y="440" width="1.2" height="6" fill="#3e3e3e"/>
<rect x="953.4" y="440" width="1.2" height="6" fill="#3e3e3e"/>
<rect x="974.8" y="440" width="1.2" height="6" fill="#3e3e3e"/>
<rect x="996.2" y="440" width="1.2" height="6" fill="#3e3e3e"/>
<rect x="1017.6" y="440" width="1.2" height="6" fill="#3e3e3e"/>
<rect x="1039.0" y="440" width="1.4" height="11.5" fill="#585858"/>
<rect x="1060.4" y="440" width="1.2" height="6" fill="#3e3e3e"/>
<rect x="1081.8" y="440" width="1.2" height="6" fill="#3e3e3e"/>
<rect x="1103.2" y="440" width="1.2" height="6" fill="#3e3e3e"/>
<rect x="1124.6" y="440" width="1.2" height="6" fill="#3e3e3e"/>
<rect x="1146.0" y="440" width="1.2" height="6" fill="#3e3e3e"/>
<rect x="1167.4" y="440" width="1.2" height="6" fill="#3e3e3e"/>
<rect x="1188.8" y="440" width="1.2" height="6" fill="#3e3e3e"/>
<rect x="1210.2" y="440" width="1.2" height="6" fill="#3e3e3e"/>
<rect x="1231.6" y="440" width="1.2" height="6" fill="#3e3e3e"/>
<rect x="1253.0" y="440" width="1.4" height="11.5" fill="#585858"/>
  <!-- left tools -->
  <g fill="none" stroke="#e2e2e2" stroke-width="1.5" stroke-linejoin="round">
    <path d="M25 413.800v12.400M18.800 420h12.400" stroke-width="1.7"/>
    <!-- cursor -->
    <path d="M61.300 412.900v13.200l3.300-3l2.200 4.800l2.200-1l-2.200-4.700l4.600-.300z" stroke-width="1.3"/>
    <path d="M85.800 419.200l2.900 2.900l2.900-2.900" stroke-width="1.5"/>
    <!-- undo -->
    <path d="M133 413.600l-3.300 3.500l3.300 3.500"/><path d="M130 417.100h7.200a3.900 3.900 0 0 1 0 7.900h-7"/>
    <!-- split -->
    <path d="M202.200 414.600h3.700v11.600h-3.700M212 414.600h-3.500v11.600h3.500"/>
    <!-- split left -->
    <path d="M248 414.600h-3.800v11.600h3.800"/>
    <path d="M238 414.600h2.800M238 426.200h2.800" />
    <path d="M240.600 415.400v10.400" stroke-dasharray="1.300 1.100" stroke-width="1.600"/>
    <!-- split right -->
    <path d="M274 414.600h3.800v11.600h-3.800"/>
    <path d="M284 414.600h-2.800M284 426.200h-2.800"/>
    <path d="M281.400 415.400v10.400" stroke-dasharray="1.300 1.100" stroke-width="1.600"/>
    <!-- delete -->
    <path d="M308 415.600h14M312.600 415.400v-2.500h4.800v2.500M310.200 415.800v10.200h9.600v-10.200"/>
    <!-- marker -->
    <path d="M347 416.200q0-1.200 1.200-1.200h6.800q1.200 0 1.200 1.200v5.600l-4.600 4.400l-4.600-4.400z"/>
    <!-- caption cut -->
    <path d="M386.500 426.200h-7v-11.600h13.600v5.400" />
    <path d="M383 418.500h7.600M383 422h4.600" stroke-width="1.300"/>
    <path d="M389.400 421.600l4.800 4.400M394.200 421.600l-4.800 4.400" stroke-width="1.100"/>
    <circle cx="389.300" cy="426.300" r="1" stroke-width="1"/><circle cx="394.300" cy="426.300" r="1" stroke-width="1"/>
  </g>
  <!-- redo (dim) -->
  <g fill="none" stroke="#5a5a5a" stroke-width="1.500" stroke-linejoin="round"><path d="M173.400 413.600l3.300 3.500l-3.300 3.500"/><path d="M176.400 417.100h-7.200a3.900 3.900 0 0 0 0 7.900h7"/></g>
  <circle cx="37" cy="408.200" r="3.100" fill="#10bfd2"/>
  <path d="M45.500 412v16M106.500 412v16M829.500 412v16M1014.500 412v16" stroke="#3c3c3c" stroke-width="1"/>
  <!-- mic -->
  <g fill="none" stroke="#e2e2e2" stroke-width="1.400" stroke-linecap="round">
    <rect x="802.300" y="412.300" width="5.600" height="10.200" rx="1.600"/>
    <path d="M799.600 419.600v1.800a5.500 5.500 0 0 0 11 0v-1.800"/>
    <path d="M805.100 426.800v1.200M801.800 428h6.600" stroke-width="1.200"/>
  </g>
  <!-- toggle buttons -->
  <g fill="#171717">
    <rect x="842" y="408" width="24" height="24" rx="5"/>
    <rect x="878" y="408" width="24" height="24" rx="5"/>
    <path d="M919 408h19.500v24H919a5 5 0 0 1-5-5v-14a5 5 0 0 1 5-5z"/>
    <path d="M939.500 408H947a5 5 0 0 1 5 5v14a5 5 0 0 1-5 5h-7.500z"/>
    <path d="M969 408h19.500v24H969a5 5 0 0 1-5-5v-14a5 5 0 0 1 5-5z"/>
    <path d="M989.500 408H997a5 5 0 0 1 5 5v14a5 5 0 0 1-5 5h-7.500z"/>
  </g>
  <g fill="#12bdd1">
    <!-- b1 -->
    <rect x="845" y="417.400" width="4.800" height="5.600"/>
    <path d="M851.200 420.200l3.300-2.900v2h1.600v1.800h-1.600v2z"/>
    <rect x="855.800" y="417.400" width="7.400" height="5.600"/>
    <!-- b2 -->
    <rect x="881" y="417.400" width="18" height="5.600" rx=".8"/>
    <!-- b3 -->
    <rect x="917" y="417.400" width="7.600" height="5.600"/><rect x="927.400" y="417.400" width="7.600" height="5.600"/>
    <!-- b4 -->
    <rect x="967" y="417.400" width="7" height="5.600"/>
    <rect x="975.300" y="413" width="1.700" height="14"/>
    <rect x="978.200" y="417.400" width="7" height="5.600"/>
  </g>
  <g fill="none" stroke="#171717">
    <path d="M857.600 420.200h4" stroke-width="1.300"/>
    <path d="M890 418.300v3.800" stroke-width="1.300"/>
    <rect x="921.400" y="418.700" width="9.200" height="3" rx="1" fill="#12bdd1" stroke-width="1"/><rect x="923.200" y="419.800" width="5.600" height=".8" fill="#171717" stroke="none"/>
    <path d="M979 419.200v7.800l2-1.700l1.300 2.600l1.300-.6l-1.300-2.600h2.600z" fill="#12bdd1" stroke-width="1.200"/>
  </g>
  <g fill="none" stroke="#12bdd1" stroke-width="1.300">
    <path d="M890 412.400v2.200M885.400 413.400l1.300 1.900M894.600 413.400l-1.300 1.900M890 425.800v2.200M885.400 427l1.300-1.900M894.600 427l-1.300-1.900"/>
  </g>
  <g fill="none" stroke="#f0f0f0" stroke-width="1.600"><path d="M942.600 418.600l3.100 3.100l3.100-3.100M992.600 418.600l3.100 3.100l3.100-3.100"/></g>
  <!-- ruler zoom -->
  <g fill="none" stroke="#e2e2e2" stroke-width="1.300">
    <path d="M1036.400 422h-5.800v-8h16v6.600"/>
    <path d="M1033.700 414v2.400M1036.900 414v3.200M1040.100 414v2.400M1043.300 414v3.200" stroke-width="1.100"/>
    <circle cx="1040.800" cy="422.300" r="3.400"/>
    <path d="M1043.300 424.900l2.300 2.200"/>
    <circle cx="1075" cy="420" r="6.200"/>
    <path d="M1072 420h6" stroke-width="1.700"/><path d="M1079.500 424.500l2 2"/>
    <circle cx="1219" cy="420" r="6.200"/>
    <path d="M1216 420h6M1219 417v6" stroke-width="1.700"/><path d="M1223.500 424.500l2 2"/>
  </g>
  <rect x="1099" y="419" width="96" height="2" fill="#000"/>
  <rect x="1099" y="419" width="15" height="2" fill="#f2f2f2"/>
  <rect x="1112" y="414" width="8" height="12" rx="4" fill="#f6f6f6"/>
  <g fill="#e2e2e2"><circle cx="1255" cy="414" r="1.150"/><circle cx="1255" cy="420" r="1.150"/><circle cx="1255" cy="426" r="1.150"/></g>

  <!-- track header icons -->
  <g fill="none" stroke="#686868" stroke-width="1"><rect x="17.500" y="579" width="11" height="8" rx=".8"/><path d="M21.600 581.200v3.600l3-1.800z" fill="#686868" stroke="none"/></g>
  <g fill="none" stroke="#e6e6e6" stroke-width="1.300">
    <rect x="43.300" y="582.300" width="7.400" height="4.400" rx=".8" stroke-width="1.500"/>
    <path d="M44.800 582v-1.200a2.200 2.200 0 0 1 4.400 0v1.200"/>
    <path d="M66.200 582.800q4.800-5 9.600 0q-4.800 5-9.600 0z" stroke-width="1.200"/>
    <circle cx="71" cy="582.800" r="1.500" stroke-width="1.200"/>
    <path d="M90 581.300h1.800l2.600-2.100v7.200l-2.600-2.100h-1.800z" stroke-width="1.100" stroke-linejoin="round"/>
    <path d="M96.200 580.800q1.300 2 0 4M98 579.600q2.400 3.200 0 6.400" stroke-width="1"/>
  </g>
</svg>
<div class="t" style="left:115.500px;top:578px;font-size:10px;font-weight:bold;color:#e6e6e6">S</div>

<!-- badge -->
<div class="abs" style="left:387px;top:404px;width:24px;height:12px;border-radius:6px;background:linear-gradient(90deg,#62dff0 0%,#bfeaf6 55%,#fbd2f2 100%)"></div>
<div class="t" style="left:390px;top:405.500px;font-size:9px;color:#101010">限免</div>

<!-- cover -->
<div class="abs" style="left:137px;top:564px;width:38px;height:38px;background:#3a3a3a;border:1px dashed #4a4a4a;border-radius:4px"></div>
<div class="t" style="left:144px;top:577px;font-size:12px;font-weight:bold;color:#f2f2f2">封面</div>

<!-- clips -->
<div class="abs" style="left:183px;top:546px;width:166px;height:73px;background:#004d52;border-radius:4px 0 0 4px"></div>
<div class="abs" style="left:350px;top:546px;width:189px;height:73px;background:#004d52;border-radius:0 4px 4px 0"></div>
<div class="abs" style="left:184px;top:564px;width:354px;height:39px;background:#fff"></div>
<div class="abs" style="left:187.500px;top:548px;width:23px;height:13.500px;background:#0f585c;border-radius:2px"></div>
<div class="abs" style="left:215px;top:548px;width:58px;height:13.500px;background:#0f585c;border-radius:2px"></div>
<div class="abs" style="left:354px;top:548px;width:23px;height:13.500px;background:#0f585c;border-radius:2px"></div>
<div class="abs" style="left:382px;top:548px;width:58px;height:13.500px;background:#0f585c;border-radius:2px"></div>
<div class="t" style="left:189.500px;top:549.500px;font-size:10px;color:#f0f0f0">白场</div>
<div class="t" style="left:217.500px;top:549.500px;font-size:10px;color:#f0f0f0">00:00:02:10</div>
<div class="t" style="left:356.500px;top:549.500px;font-size:10px;color:#f0f0f0">白场</div>
<div class="t" style="left:384.500px;top:549.500px;font-size:10px;color:#f0f0f0">00:00:02:20</div>
<!-- transition glow -->
<div class="abs" style="left:342px;top:546px;width:15px;height:73px;background:linear-gradient(90deg,rgba(0,200,225,0) 0%,rgba(0,200,225,.42) 35%,rgba(0,200,225,.5) 50%,rgba(0,200,225,.42) 65%,rgba(0,200,225,0) 100%)"></div>
<!-- playhead -->
<div class="abs" style="left:348.500px;top:449px;width:2.200px;height:246px;background:#a4a4a4"></div>
<svg style="left:340px;top:432px" width="20" height="22"><path d="M5.600 5.200h8.600v8q0 3.800-4.300 3.800t-4.300-3.800z" fill="#262626" stroke="#f4f4f4" stroke-width="1.600" stroke-linejoin="round"/></svg>
<!-- scrollbar -->
<div class="abs" style="left:135px;top:703px;width:1128px;height:6px;background:#454545;border-radius:3px"></div>

<!-- red highlight -->
<div class="abs" style="left:19px;top:31px;width:434px;height:94px;border:4px solid #ff5353;border-radius:3px;z-index:40"></div>
<!-- bottom-right bar -->
<div class="abs" style="left:1041px;top:715px;width:239px;height:5px;background:#383b4b;border-top-left-radius:4px;z-index:60"></div>
<div class="win"></div>
</body>
</html>
